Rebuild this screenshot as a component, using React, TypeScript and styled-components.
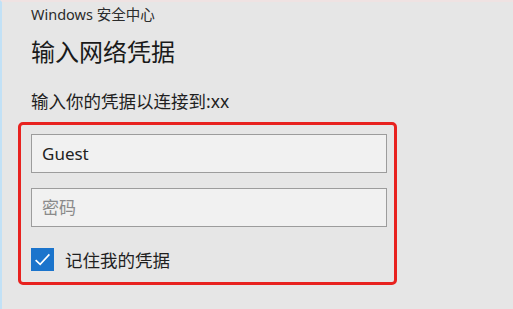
import styled, { createGlobalStyle } from 'styled-components';

const GlobalStyle = createGlobalStyle`
  html, body {
    margin: 0;
    padding: 0;
    background: #e6e6e6;
  }
  body {
    font-family: "Noto Sans", "Noto Sans CJK SC", sans-serif;
    color: #1f1f1f;
  }
`;

const Window = styled.div`
  width: 513px;
  height: 309px;
  box-sizing: border-box;
  border-left: 2px solid #c2e1f6;
  border-top: 2px solid #efe2e2;
  padding-left: 29px;
  display: flex;
  flex-direction: column;
  overflow: hidden;
`;

const AppName = styled.div`
  font-size: 14.5px;
  line-height: 20px;
  margin-top: 2px;
  color: #2b2b2b;
`;

const Title = styled.h1`
  font-size: 24px;
  font-weight: 400;
  line-height: 32px;
  margin: 12px 0 0;
  color: #1a1a1a;
`;

const Subtitle = styled.div`
  font-size: 17.5px;
  line-height: 24px;
  margin-top: 21px;
  color: #1f1f1f;
`;

const Highlight = styled.div`
  margin: 9px 0 0 -13px;
  width: 379px;
  height: 163px;
  box-sizing: border-box;
  border: 3px solid #e8221f;
  border-radius: 5px;
  padding: 9px 0 0 10px;
  display: flex;
  flex-direction: column;
  gap: 15px;
`;

const Field = styled.input`
  width: 356px;
  height: 39px;
  box-sizing: border-box;
  border: 1.5px solid #9c9c9c;
  background: #f1f1f1;
  padding: 0 10px;
  font-family: "Noto Sans", "Noto Sans CJK SC", sans-serif;
  font-size: 17px;
  color: #222;
  outline: none;

  &::placeholder {
    color: #8a8a8a;
  }
`;

const CheckRow = styled.label`
  display: flex;
  align-items: center;
  gap: 11px;
  margin-top: 5px;
  font-size: 17.5px;
  color: #1f1f1f;
`;

const Box = styled.span`
  width: 23px;
  height: 23px;
  background: #1b74cc;
  display: flex;
  align-items: center;
  justify-content: center;
`;

export default function App() {
  return (
    <>
      <GlobalStyle />
      <Window>
        <AppName>Windows 安全中心</AppName>
        <Title>输入网络凭据</Title>
        <Subtitle>输入你的凭据以连接到:xx</Subtitle>
        <Highlight>
          <Field type="text" defaultValue="Guest" />
          <Field type="password" placeholder="密码" />
          <CheckRow>
            <Box>
              <svg width="19" height="19" viewBox="0 0 18 18">
                <path d="M2.5 9.5 L6.8 13.6 L15.5 4.2" fill="none" stroke="#fff" strokeWidth="1.6" />
              </svg>
            </Box>
            记住我的凭据
          </CheckRow>
        </Highlight>
      </Window>
    </>
  );
}
